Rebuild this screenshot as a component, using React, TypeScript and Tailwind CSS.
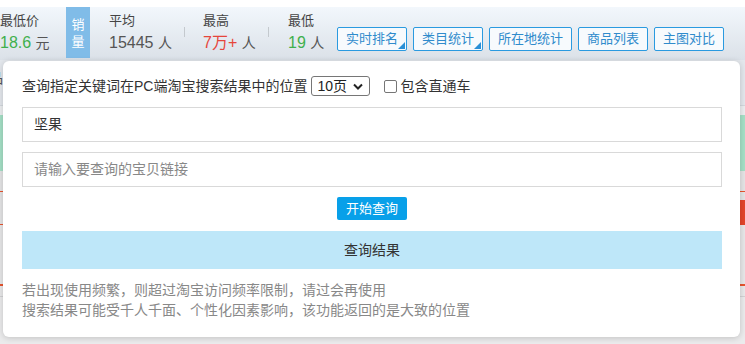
import React from "react";

const font = { fontFamily: '"Liberation Sans", "Noto Sans CJK SC", sans-serif' };
const cjk = { fontFamily: '"Noto Sans CJK SC", sans-serif' };

function Stat({ label, children, className }: { label: string; children: React.ReactNode; className: string }) {
  return (
    <div className={"flex flex-col " + className}>
      <div className="mt-[6px] h-[16px] text-[13px] leading-[16px] text-[#444]">{label}</div>
      <div className="mt-[4px] h-[20px] text-[16px] leading-[20px] text-[#555] whitespace-nowrap">{children}</div>
    </div>
  );
}

function Sep() {
  return <div className="mt-[20px] h-[10px] w-px self-start bg-[#c4c9ce]" />;
}

function TopBtn({ text, corner }: { text: string; corner?: boolean }) {
  return (
    <div className="relative mt-[20px] flex h-[24px] items-center rounded-[2px] border border-[#2a9ae0] bg-[#f7fafd] px-[8px] text-[13px] leading-[16px] text-[#2f8bcc] whitespace-nowrap">
      {text}
      {corner && (
        <svg className="absolute bottom-[1px] right-[1px]" width="7" height="7" viewBox="0 0 7 7">
          <polygon points="7,0 7,7 0,7" fill="#2a8fd6" />
        </svg>
      )}
    </div>
  );
}

export default function App() {
  return (
    <div lang="zh-CN" className="relative h-[344px] w-[745px] overflow-hidden bg-[#e7e8ea]" style={font}>
      <div className="h-[7px] bg-white" />
      <div className="flex h-[53px] bg-gradient-to-b from-[#f2f7fc] to-[#dbe1e8]">
        <Stat label="最低价" className="w-[66px]">
          <span className="text-[#3fb04d]">18.6</span> <span className="text-[14px]">元</span>
        </Stat>
        <div className="mb-[2px] flex w-[24px] flex-col items-center justify-center bg-[#80bce8] text-[13px] leading-[17px] text-white">
          <span>销</span>
          <span>量</span>
        </div>
        <Stat label="平均" className="w-[94px] pl-[19px]">
          15445 <span className="text-[14px]">人</span>
        </Stat>
        <Sep />
        <Stat label="最高" className="w-[83px] pl-[18px]">
          <span className="text-[#e6463c]">7万+</span> <span className="text-[14px]">人</span>
        </Stat>
        <Sep />
        <Stat label="最低" className="w-[48px] pl-[19px]">
          <span className="text-[#3fb04d]">19</span> <span className="text-[14px]">人</span>
        </Stat>
        <div className="ml-[20px] flex gap-[6px]">
          <TopBtn text="实时排名" corner />
          <TopBtn text="类目统计" corner />
          <TopBtn text="所在地统计" />
          <TopBtn text="商品列表" />
          <TopBtn text="主图对比" />
        </div>
      </div>

      {/* background content under the popup */}
      <div className="flex h-[45px] items-start bg-[#e3e7ec]">
        <span className="-ml-[11px] mt-[10px] text-[14px] leading-[16px] text-[#555]">品</span>
      </div>
      <div className="h-px bg-[#d3d8dd]" />
      <div className="h-[9px] bg-[#eceef0]" />
      <div className="h-[56px] bg-[#a5e0c6]" />
      <div className="h-[20px] bg-[#e4e4e5]" />
      <div className="h-px bg-[#e8542f]" />
      <div className="flex h-[8px] bg-[#e4e4e5]" />
      <div className="flex h-[25px]">
        <div className="flex flex-1 flex-col justify-end bg-[#e4e4e5]">
          <div className="h-px bg-[#e8542f]" />
        </div>
        <div className="w-[6px] bg-[#e3452a]" />
      </div>
      <div className="h-[59px] bg-[#e7e7e8]" />
      <div className="h-[2px] bg-[#e8542f]" />
      <div className="h-[10px] bg-[#e9e9ea]" />
      <div className="h-px bg-[#d2d2d4]" />
      <div className="h-[47px] bg-[#ebebec]" />

      {/* popup */}
      <div className="absolute left-[3px] top-[61px] flex h-[276px] w-[737px] flex-col rounded-[6px] bg-white pl-[19px] pr-[18px] pt-[15px] shadow-[0_1px_6px_rgba(0,0,0,0.18)]">
        <div className="flex h-[20px] items-center text-[14px] leading-[20px] text-[#333]">
          <span>查询指定关键词在PC端淘宝搜索结果中的位置</span>
          <div className="ml-[4px] flex h-[20px] w-[59px] items-center justify-between rounded-[3px] border border-[#767676] pl-[5px] pr-[6px] text-[14px] text-[#222]">
            <span>10页</span>
            <svg width="10" height="7" viewBox="0 0 10 7">
              <polyline points="1,1.5 5,5.5 9,1.5" fill="none" stroke="#222" strokeWidth="2" />
            </svg>
          </div>
          <div className="ml-[14px] h-[13px] w-[13px] rounded-[2px] border border-[#767676] bg-white" />
          <span className="ml-[3px]">包含直通车</span>
        </div>
        <div className="mt-[11px] flex h-[35px] w-[700px] items-center border border-[#d9d9d9] px-[11px] text-[14px] text-[#333]">
          坚果
        </div>
        <div className="mt-[10px] flex h-[35px] w-[700px] items-center border border-[#d9d9d9] px-[11px] text-[14px] text-[#888]">
          请输入要查询的宝贝链接
        </div>
        <div className="mt-[10px] flex w-[700px] justify-center">
          <div className="flex h-[23px] items-center rounded-[2px] bg-[#08a0e9] px-[9px] text-[13px] leading-[16px] text-white">
            开始查询
          </div>
        </div>
        <div className="mt-[11px] flex h-[38px] w-[700px] items-center justify-center bg-[#bee7f9] text-[14px] text-[#333]">
          查询结果
        </div>
        <div className="mt-[10px] text-[14px] leading-[20px] text-[#888] [text-spacing-trim:space-all]" style={cjk}>
          <div>若出现使用频繁，则超过淘宝访问频率限制，请过会再使用</div>
          <div>搜索结果可能受千人千面、个性化因素影响，该功能返回的是大致的位置</div>
        </div>
      </div>
    </div>
  );
}
